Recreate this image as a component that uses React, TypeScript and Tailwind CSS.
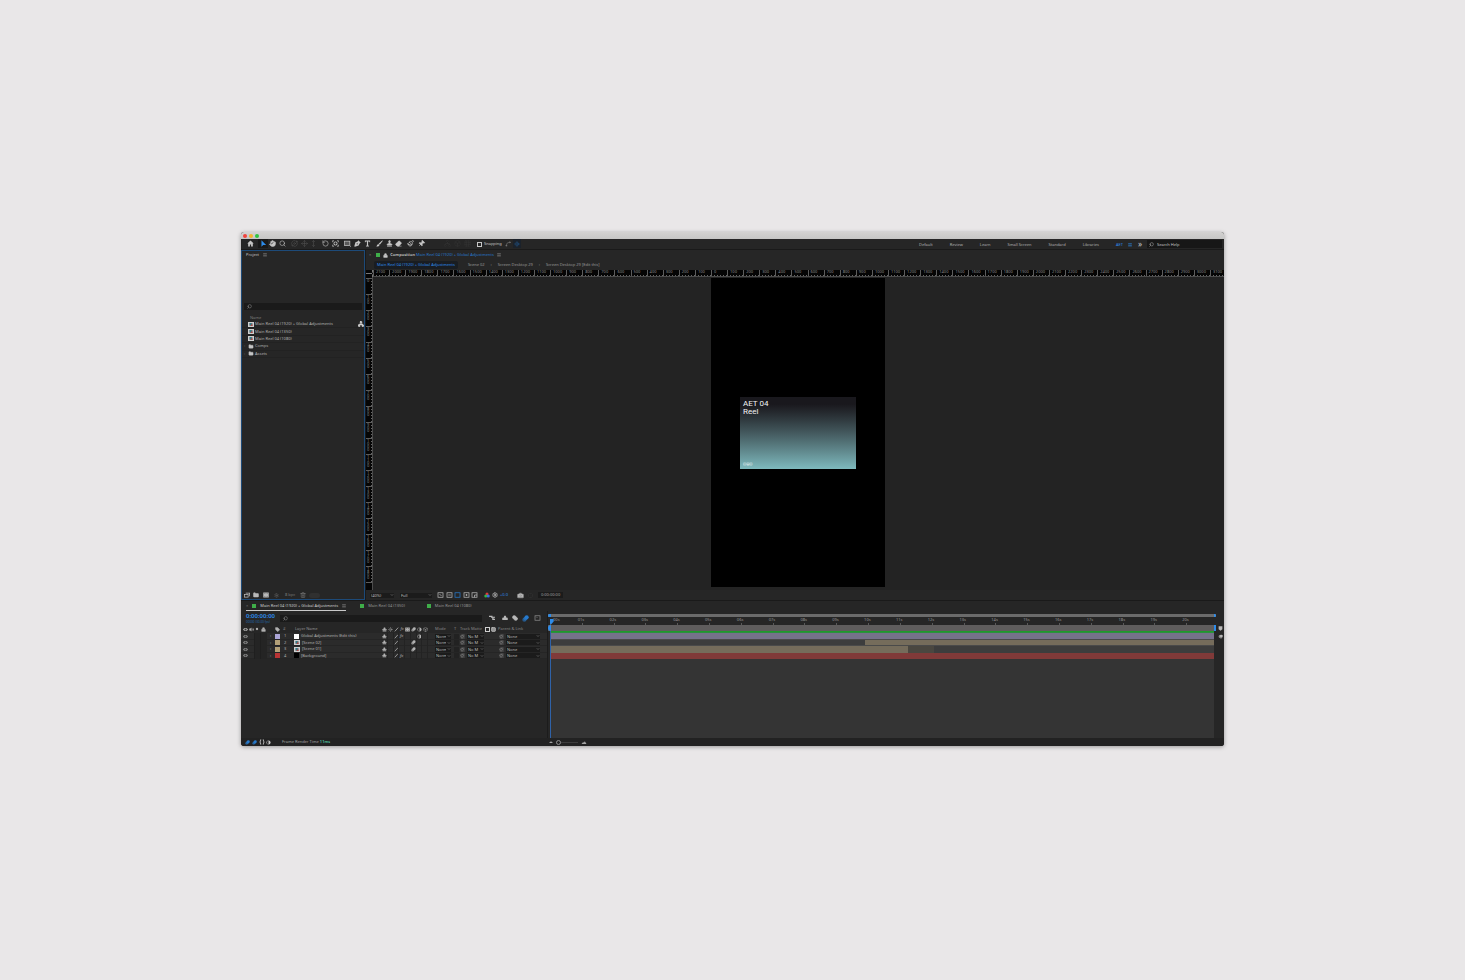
import React from "react";
import type { ReactNode } from "react";
import {
  Blend,
  Box,
  Camera,
  ChevronDown,
  CircleDashed,
  Eraser,
  Folder,
  Grid3x3,
  Hand,
  Lock,
  LocateFixed,
  Move,
  MoveVertical,
  Network,
  Orbit,
  Paintbrush,
  Pin,
  RotateCcw,
  Search,
  Settings,
  Spline,
  Stamp,
  Sun,
  Tag,
  Trash2,
  Volume2,
} from "lucide-react";

const LONG_NAME = "Main Reel 04 (1920) + Global Adjustments";

function Svg({ children, className = "size-[7px]" }: { children: ReactNode; className?: string }) {
  return (
    <svg viewBox="0 0 24 24" fill="currentColor" className={className} aria-hidden="true">
      {children}
    </svg>
  );
}

const HomeIcon = () => (
  <Svg>
    <path d="M12 2 1 12h3v10h6v-7h4v7h6V12h3z" />
  </Svg>
);
const ArrowIcon = () => (
  <Svg>
    <path d="M5 1v22l6-6 2 0 8 0z" />
  </Svg>
);
const PenIcon = () => (
  <Svg>
    <path d="M15 1l8 8-4 3-3 7L3 23l-2-2L5 8l7-3zM4 20l6-6" />
    <circle cx="11" cy="13" r="2" fill="#262626" />
  </Svg>
);
const TypeIcon = () => (
  <Svg>
    <path d="M3 2h18v6h-2l-1-3h-4v14l3 1v2H7v-2l3-1V5H6L5 8H3z" />
  </Svg>
);
const BrushIcon = () => (
  <Svg>
    <path d="M22 1l1 2-10 13-4-3zM8 14l4 4c-2 4-6 5-11 4 3-2 3-7 7-8z" />
  </Svg>
);
const ShapeIcon = () => (
  <svg viewBox="0 0 24 24" fill="none" stroke="currentColor" strokeWidth="2.5" className="size-[7px]" aria-hidden="true">
    <rect x="1" y="4" width="19" height="15" fill="#5a5a5a" />
    <path d="M20 23h4v-4z" fill="currentColor" stroke="none" />
  </svg>
);
const MenuIcon = ({ className = "size-[4px] text-[#8a8a8a]" }: { className?: string }) => (
  <Svg className={className}>
    <path d="M1 3h22v3H1zM1 10h22v3H1zM1 17h22v3H1z" />
  </Svg>
);
const CompIcon = () => (
  <svg viewBox="0 0 24 20" className="h-[5px] w-[6px] shrink-0" aria-hidden="true">
    <rect width="24" height="20" fill="#cfcfcf" />
    <rect x="6" y="4" width="12" height="12" fill="#6c7478" />
    <circle cx="10" cy="8" r="4" fill="#2c7f8c" />
    <rect x="12" y="10" width="6" height="6" fill="#b0453f" />
  </svg>
);
const EyeIcon = () => (
  <Svg className="size-[5px]">
    <path d="M0 12C4 6 8 5 12 5s8 1 12 7c-4 6-8 7-12 7S4 18 0 12z" />
    <circle cx="12" cy="12" r="5" fill="#3a3a3a" />
  </Svg>
);
const ShyIcon = () => (
  <Svg className="size-[5px]">
    <path d="M9 2h6l2 5v4h6v3H1v-3h6V7zM3 16h18v5H3z" />
  </Svg>
);
const SlashIcon = () => (
  <svg viewBox="0 0 24 24" fill="none" stroke="currentColor" strokeWidth="4" className="size-[5px]" aria-hidden="true">
    <path d="M4 21 20 3" />
  </svg>
);
const BlurIcon = ({ className = "size-[5px]" }: { className?: string }) => (
  <Svg className={className}>
    <circle cx="8" cy="16" r="7" opacity=".6" />
    <circle cx="12" cy="12" r="7" opacity=".7" />
    <circle cx="16" cy="8" r="7" />
  </Svg>
);
const HalfIcon = () => (
  <Svg className="size-[5px]">
    <circle cx="12" cy="12" r="10" />
    <path d="M12 4a8 8 0 0 0 0 16z" fill="#262626" />
  </Svg>
);
const BracesIcon = () => (
  <Svg className="size-[6px]">
    <path d="M9 2H6C3 2 4 8 4 9c0 2-3 1-3 3s3 1 3 3c0 1-1 7 2 7h3v-3H7v-5l-2-2 2-2V5h2zM15 2h3c3 0 2 6 2 7 0 2 3 1 3 3s-3 1-3 3c0 1 1 7-2 7h-3v-3h2v-5l2-2-2-2V5h-2z" />
  </Svg>
);
const FilmIcon = ({ className = "size-[5px]" }: { className?: string }) => (
  <Svg className={className}>
    <path d="M1 2h22v20H1zM6 5v2h3V5zm0 12v2h3v-2zm9-12v2h3V5zm0 12v2h3v-2z" fillRule="evenodd" />
  </Svg>
);
const FootageIcon = () => (
  <Svg className="size-[6px]">
    <path d="M7 3h17v14h-3V6H7z" />
    <path d="M0 8h18v14H0zm3 3v8h12v-8z" fillRule="evenodd" />
  </Svg>
);
const WhipIcon = () => (
  <svg viewBox="0 0 24 24" fill="none" stroke="currentColor" strokeWidth="3" className="size-[5px]" aria-hidden="true">
    <path d="M20 5H9a7 7 0 1 0 8 7 4 4 0 1 0-6 3" />
    <path d="M21 2v20H3" opacity=".4" />
  </svg>
);
const MonitorIcon = ({ mark }: { mark?: ReactNode }) => (
  <svg viewBox="0 0 24 24" fill="none" stroke="currentColor" strokeWidth="3" className="h-[6px] w-[7px]" aria-hidden="true">
    <rect x="2" y="3" width="20" height="18" />
    {mark}
  </svg>
);

function IconButton({
  label,
  className,
  children,
}: {
  label: string;
  className: string;
  children: ReactNode;
}) {
  return (
    <button type="button" aria-label={label} className={`flex h-full shrink-0 items-center justify-center ${className}`}>
      {children}
    </button>
  );
}

function Select({ label, value, className }: { label: string; value: string; className: string }) {
  return (
    <span className={`flex items-center bg-[#1b1b1b] ${className}`}>
      <select aria-label={label} className="h-[5px] w-full min-w-0 appearance-none bg-transparent px-px leading-[5px] text-[#bdbdbd]">
        <option>{value}</option>
      </select>
      <ChevronDown className="pointer-events-none size-[4px] shrink-0 text-[#8f8f8f]" strokeWidth={3} />
    </span>
  );
}

function Toolbar() {
  const spaces = ["Default", "Review", "Learn", "Small Screen", "Standard", "Libraries"];
  return (
    <header className="flex h-[10px] items-center bg-[#262626] text-[#c6c6c6]">
      <div className="flex h-full items-center pb-px pl-[4px]">
        <IconButton label="Home" className="w-[11px]"><HomeIcon /></IconButton>
        <IconButton label="Selection" className="ml-[2px] w-[10px] bg-[#1a1a1a] text-[#2d8ceb]"><ArrowIcon /></IconButton>
        <IconButton label="Hand" className="w-[9px]"><Hand className="size-[7px] fill-current" /></IconButton>
        <IconButton label="Zoom" className="w-[10px]"><Search className="size-[7px]" /></IconButton>
        <div className="ml-[2px] flex h-full text-[#505050]">
          <IconButton label="Orbit" className="w-[10px]"><Orbit className="size-[7px]" /></IconButton>
          <IconButton label="Pan camera" className="w-[10px]"><Move className="size-[7px]" /></IconButton>
          <IconButton label="Dolly" className="w-[9px]"><MoveVertical className="size-[7px]" /></IconButton>
        </div>
        <IconButton label="Rotation" className="ml-[2px] w-[10px]"><RotateCcw className="size-[7px]" /></IconButton>
        <IconButton label="Anchor point" className="w-[10px]">
          <Svg>
            <path d="M1 2h6v2H3v4H1zM17 2h6v6h-2V4h-4zM1 16h2v4h4v2H1zM21 16h2v6h-6v-2h4z" />
            <path d="M12 5a7 7 0 1 0 0 14 7 7 0 0 0 0-14zm0 3a4 4 0 1 1 0 8 4 4 0 0 1 0-8z" fillRule="evenodd" />
          </Svg>
        </IconButton>
        <IconButton label="Rectangle" className="ml-[2px] w-[11px]"><ShapeIcon /></IconButton>
        <IconButton label="Pen" className="w-[9px]"><PenIcon /></IconButton>
        <IconButton label="Type" className="w-[10px]"><TypeIcon /></IconButton>
        <IconButton label="Brush" className="ml-[2px] w-[10px]"><BrushIcon /></IconButton>
        <IconButton label="Clone stamp" className="w-[10px]"><Stamp className="size-[7px] fill-current" /></IconButton>
        <IconButton label="Eraser" className="w-[9px]"><Eraser className="size-[7px] fill-current" /></IconButton>
        <IconButton label="Roto brush" className="ml-[2px] w-[11px]"><Paintbrush className="size-[7px]" strokeWidth={2.5} /></IconButton>
        <IconButton label="Puppet pin" className="w-[11px]"><Pin className="size-[7px] rotate-45 fill-current" /></IconButton>
        <div className="ml-[15px] flex h-full text-[#343434]">
          <IconButton label="Local axis" className="w-[10px]"><Network className="size-[7px]" /></IconButton>
          <IconButton label="World axis" className="w-[10px]"><Box className="size-[7px]" /></IconButton>
          <IconButton label="View axis" className="w-[10px]"><Grid3x3 className="size-[7px]" /></IconButton>
        </div>
        <label className="ml-[5px] flex items-center gap-[2px] pt-px">
          <input type="checkbox" className="size-[5px] appearance-none border border-[#c6c6c6]" />
          Snapping
        </label>
        <IconButton label="Snap edges" className="ml-[2px] w-[8px] text-[#8a8a8a]"><Spline className="size-[6px]" /></IconButton>
        <IconButton label="Snap features" className="ml-px w-[8px] bg-[#1b222b] text-[#24507c]"><LocateFixed className="size-[6px]" /></IconButton>
      </div>
      <nav className="ml-auto flex items-center gap-[17px] pt-px text-[#b0b0b0]">
        {spaces.map((s) => (
          <button key={s} type="button">{s}</button>
        ))}
        <button type="button" className="flex items-center gap-[5px] text-[#2d8ceb]">
          AET
          <MenuIcon className="size-[4px]" />
        </button>
      </nav>
      <button type="button" aria-label="More workspaces" className="ml-[6px] text-[8px] leading-[6px]">»</button>
      <label className="ml-[5px] mr-[2px] flex h-[8px] w-[75px] items-center gap-[3px] bg-[#171717] pt-px pl-[2px]">
        <Search className="size-[5px] -scale-x-100" />
        <input aria-label="Search Help" placeholder="Search Help" className="w-[60px] placeholder:text-[#c6c6c6]" />
      </label>
    </header>
  );
}

function ProjectPanel() {
  const items = [
    { name: LONG_NAME, comp: true },
    { name: "Main Reel 04 (1350)", comp: true },
    { name: "Main Reel 04 (1080)", comp: true },
    { name: "Comps", comp: false },
    { name: "Assets", comp: false },
  ];
  return (
    <section className="flex w-[124px] shrink-0 flex-col border border-[#1d4a78] bg-[#262626]">
      <h2 className="flex h-[8px] items-center gap-[4px] pl-[4px] text-[#c4c4c4]">
        Project <MenuIcon />
      </h2>
      <label className="mx-[2px] mt-[44px] flex h-[7px] items-center bg-[#1a1a1a] pl-[3px] text-[#a8a8a8]">
        <Search className="size-[5px] -scale-x-100" />
        <input aria-label="Search project" className="min-w-0 flex-1" />
      </label>
      <p className="mt-[5px] h-[6px] pl-[8px] text-[#7c7c7c]">Name</p>
      <ul className="grid h-[37px] grid-rows-5">
        {items.map((it) => (
          <li key={it.name} className="flex items-center gap-px border-b border-[#222222] pl-[2px] text-[#b2b2b2]">
            <span className="w-[3px] text-[#6a6a6a]">{it.comp ? "" : "›"}</span>
            {it.comp ? <CompIcon /> : <Folder className="h-[5px] w-[6px] fill-[#c4c4c4] text-[#c4c4c4]" />}
            <span>{it.name}</span>
            {it.name === LONG_NAME && <Network className="ml-auto size-[6px] fill-current text-[#d0d0d0]" strokeWidth={3} />}
          </li>
        ))}
      </ul>
      <footer className="mt-auto flex h-[8px] items-center text-[#b8b8b8]">
        <IconButton label="Interpret footage" className="w-[9px]"><FootageIcon /></IconButton>
        <IconButton label="New folder" className="w-[10px]"><Folder className="size-[6px] fill-current" /></IconButton>
        <IconButton label="New composition" className="w-[9px]"><FilmIcon className="size-[6px]" /></IconButton>
        <IconButton label="Adjust" className="w-[12px] text-[#6a6a6a]"><Settings className="size-[5px]" /></IconButton>
        <button type="button" className="ml-[3px] text-[#7c7c7c]">8 bpc</button>
        <IconButton label="Delete" className="ml-[3px] w-[9px] text-[#808080]"><Trash2 className="size-[6px]" /></IconButton>
        <span className="ml-[2px] h-[5px] w-[11px] rounded-full bg-[#303030]" />
      </footer>
    </section>
  );
}

const rulerMarks = Array.from({ length: 53 }, (_, i) => Math.abs(i - 21) * 100);
const sideMarks = Array.from({ length: 19 }, (_, i) => i * 100);

function Viewer() {
  return (
    <section className="flex min-w-0 flex-1 flex-col bg-[#262626]">
      <h2 className="flex h-[10px] shrink-0 items-center pl-[3px] text-[#c8c8c8]">
        <button type="button" aria-label="Close" className="text-[#777777]">×</button>
        <span className="ml-[5px] size-[4px] bg-[#3fae49]" />
        <Lock className="ml-[3px] size-[5px] fill-current" />
        <span className="ml-[2px] font-semibold">Composition</span>
        <span className="ml-px text-[#2679cc]">{LONG_NAME}</span>
        <MenuIcon className="ml-[3px] size-[4px] text-[#8a8a8a]" />
      </h2>
      <nav className="flex h-[10px] shrink-0 items-center gap-[6px] pl-[8px] text-[#9a9a9a]">
        <a href="#reel" className="rounded-[2px] bg-[#191d22] px-[3px] leading-[8px] text-[#2d8ceb]">{LONG_NAME}</a>
        <a href="#scene" className="pl-[4px]">Scene 02</a>
        <span>‹</span>
        <a href="#screen">Screen Desktop 29</a>
        <span>‹</span>
        <a href="#edit">Screen Desktop 29 [Edit this]</a>
      </nav>
      <div className="flex h-[7px] shrink-0 overflow-hidden bg-[#050505]">
        <div className="w-[7px] shrink-0 border-r border-dashed border-[#777777]">
          <div className="mt-[3px] border-t border-dashed border-[#777777]" />
        </div>
        <div className="-mr-[2px] flex flex-1 border-b border-[#4c4c4c]">
          {rulerMarks.map((m, i) => (
            <div
              key={i}
              className="flex min-w-0 flex-1 flex-col justify-between border-l border-[#5c5c5c] text-[4px] leading-[4px] text-[#8c8c8c]"
            >
              <span className="pl-[2px]">{m}</span>
              <span className="ml-[2px] h-px bg-[repeating-linear-gradient(90deg,#666666_0_1px,transparent_1px_3px)]" />
            </div>
          ))}
        </div>
      </div>
      <div className="flex h-[313px] shrink-0">
        <div className="flex w-[7px] shrink-0 flex-col border-r border-[#4c4c4c] bg-[#050505] pt-px">
          {sideMarks.map((m) => (
            <div key={m} className="flex h-[16px] shrink-0 justify-between border-t border-[#5c5c5c]">
              <span className="pl-px text-[4px] leading-[3px] text-[#8c8c8c]">
                {String(m).split("").map((d, i) => (
                  <span key={i} className="block">{d}</span>
                ))}
              </span>
              <span className="mt-[2px] w-px bg-[repeating-linear-gradient(180deg,#666666_0_1px,transparent_1px_3px)]" />
            </div>
          ))}
          <div className="flex-1 border-t border-[#5c5c5c]" />
        </div>
        <div className="flex flex-1 items-start justify-center bg-[#232323] pt-px pr-px">
          <div className="flex h-[309px] w-[174px] items-center justify-center bg-black">
            <div className="flex h-[72px] w-[116px] flex-col justify-between bg-linear-to-b from-[#19181d] from-10% to-[#7ebabe] px-[3px] pt-[3px] pb-[2px] font-['Roboto',sans-serif] text-[8px] leading-[8px] text-[#f2f2f2]">
              <p>AET 04<br />Reel</p>
              <p className="text-[4px] leading-[5px] text-white">©®©</p>
            </div>
          </div>
        </div>
      </div>
      <footer className="flex h-[10px] shrink-0 items-center pl-[4px] text-[#b8b8b8]">
        <Select label="Magnification" value="(40%)" className="w-[24px]" />
        <Select label="Resolution" value="Full" className="ml-[6px] w-[32px]" />
        <div className="ml-[4px] flex h-full items-center">
          <IconButton label="Fast previews" className="w-[9px]"><MonitorIcon mark={<path d="m8 8 8 8" />} /></IconButton>
          <IconButton label="Transparency grid" className="w-[8px]"><MonitorIcon mark={<path d="M7 12h10" />} /></IconButton>
          <IconButton label="Mask visibility" className="w-[9px] text-[#2679cc]"><MonitorIcon /></IconButton>
          <IconButton label="Region of interest" className="w-[8px]"><MonitorIcon mark={<path d="M12 8v8M8 12h8" />} /></IconButton>
          <IconButton label="Guides" className="w-[9px]"><MonitorIcon mark={<path d="M12 21v-9h10" />} /></IconButton>
        </div>
        <IconButton label="Channels" className="ml-[4px] w-[8px]">
          <Svg className="size-[6px]">
            <circle cx="12" cy="8" r="6" fill="#e03a3a" />
            <circle cx="7" cy="16" r="6" fill="#35b34a" />
            <circle cx="17" cy="16" r="6" fill="#3a6fe0" />
          </Svg>
        </IconButton>
        <IconButton label="Reset exposure" className="w-[8px]"><Settings className="size-[6px]" strokeWidth={3} /></IconButton>
        <button type="button" className="ml-px text-[#2d8ceb]">+0.0</button>
        <IconButton label="Take snapshot" className="ml-[9px] w-[8px]"><Camera className="size-[7px] fill-current stroke-[#8f8f8f]" /></IconButton>
        <IconButton label="Show snapshot" className="ml-[2px] w-[8px] text-[#3d3d3d]"><CircleDashed className="size-[5px]" /></IconButton>
        <button type="button" className="ml-[3px] h-[6px] bg-[#1b1b1b] px-[3px] leading-[6px] text-[#a0a0a0]">0:00:00:00</button>
      </footer>
    </section>
  );
}

type Layer = {
  name: string;
  swatch: string;
  kind: "white" | "comp" | "black";
  fx: boolean;
  blur: boolean;
  adjust: boolean;
};

const layers: Layer[] = [
  { name: "Global Adjustments (Edit this)", swatch: "bg-[#aba5d6]", kind: "white", fx: true, blur: false, adjust: true },
  { name: "[Scene 02]", swatch: "bg-[#b3a077]", kind: "comp", fx: false, blur: true, adjust: false },
  { name: "[Scene 01]", swatch: "bg-[#b3a077]", kind: "comp", fx: false, blur: true, adjust: false },
  { name: "[Background]", swatch: "bg-[#b93434]", kind: "black", fx: true, blur: false, adjust: false },
];

const COLS =
  "grid grid-cols-[6px_6px_6px_6px_8px_6px_13px_88px_46px_26px_6px_24px_14px_7px_36px] items-center pl-[2px] whitespace-nowrap";

function LayerTable() {
  return (
    <table className="block">
      <thead className="block">
        <tr className={`${COLS} h-[8px] bg-[#262626] text-[#b0b0b0] [&>th]:text-left [&>th]:font-normal`}>
          <th aria-label="Visible"><EyeIcon /></th>
          <th aria-label="Audio"><Volume2 className="size-[5px] fill-current" /></th>
          <th aria-label="Solo"><Svg className="size-[4px]"><circle cx="12" cy="12" r="7" /></Svg></th>
          <th aria-label="Lock"><Lock className="size-[5px] fill-current" /></th>
          <th />
          <th aria-label="Label"><Tag className="size-[5px] fill-current" /></th>
          <th className="pl-[2px] text-[#8a8a8a]">#</th>
          <th className="pl-px text-[#949494]">Layer Name</th>
          <th aria-label="Switches">
            <span className="grid grid-cols-8 place-items-center">
              <ShyIcon />
              <Sun className="size-[5px]" />
              <SlashIcon />
              <i>fx</i>
              <FilmIcon />
              <BlurIcon />
              <HalfIcon />
              <Box className="size-[5px]" />
            </span>
          </th>
          <th className="pl-[7px] text-[#868686]">Mode</th>
          <th className="text-[#868686]">T</th>
          <th className="text-[#868686]">Track Matte</th>
          <th aria-label="Matte options">
            <span className="flex gap-px pl-px text-[#d0d0d0]">
              <span className="size-[5px] border border-current" />
              <Grid3x3 className="size-[5px]" strokeWidth={3} />
            </span>
          </th>
          <th className="text-[#868686]" colSpan={2}>Parent &amp; Link</th>
        </tr>
      </thead>
      <tbody className="grid h-[26px] grid-rows-4">
        {layers.map((l, i) => (
          <tr key={l.name} className={`${COLS} overflow-hidden bg-[#2b2b2b] text-[#b2b2b2] shadow-[inset_0_-1px_0_#252525]`}>
            <td className="text-[#8a8a8a]"><EyeIcon /></td>
            <td className="h-full border-r border-[#1f1f1f]" />
            <td className="h-full border-r border-[#1f1f1f] bg-[#242424]" />
            <td className="h-full bg-[#242424]" />
            <td className="pl-[3px]">›</td>
            <td><span className={`block size-[5px] ${l.swatch}`} /></td>
            <td className="pl-[3px]">{i + 1}</td>
            <td>
              <span className="flex items-center gap-[2px]">
                {l.kind === "comp" && <CompIcon />}
                {l.kind === "white" && <span className="size-[5px] bg-white" />}
                {l.kind === "black" && <span className="size-[5px] bg-black" />}
                {l.name}
              </span>
            </td>
            <td className="h-full">
              <span className="grid h-full grid-cols-8 place-items-center *:flex *:h-full *:w-full *:items-center *:justify-center *:border-r *:border-[#232323]">
                <span><ShyIcon /></span>
                <span />
                <span><SlashIcon /></span>
                <span className="italic">{l.fx ? "fx" : ""}</span>
                <span />
                <span>{l.blur && <BlurIcon />}</span>
                <span>{l.adjust && <HalfIcon />}</span>
                <span />
              </span>
            </td>
            <td className="pl-[7px]"><Select label={`Mode of layer ${i + 1}`} value="Norm" className="w-[16px]" /></td>
            <td><span className="block size-[5px] bg-[#222222]" /></td>
            <td>
              <span className="flex items-center gap-[2px] text-[#8a8a8a]">
                <WhipIcon />
                <Select label={`Track matte of layer ${i + 1}`} value="No M" className="w-[17px]" />
              </span>
            </td>
            <td />
            <td className="pl-px text-[#8a8a8a]"><WhipIcon /></td>
            <td className="pl-px"><Select label={`Parent of layer ${i + 1}`} value="None" className="w-[34px]" /></td>
          </tr>
        ))}
      </tbody>
    </table>
  );
}

const seconds = Array.from({ length: 21 }, (_, i) => String(i).padStart(2, "0") + "s");

function Tracks() {
  return (
    <div className="flex min-w-0 flex-1 border-l border-[#1c1c1c] bg-[#262626]">
      <div className="flex min-w-0 flex-1 flex-col">
        <div className="mt-[3px] flex h-[3px] bg-[#6b6b6b]">
          <span className="w-[3px] rounded-l-full bg-[#2d8ceb]" />
          <span className="ml-auto w-[2px] rounded-r-full bg-[#2d8ceb]" />
        </div>
        <div className="ml-[2px] flex h-[8px] overflow-hidden">
          <ol className="-mr-[2px] grid flex-1 grid-cols-21 text-[#989898]">
            {seconds.map((s, i) => (
              <li key={s} className="relative flex flex-col justify-between">
                <span className={i === 0 ? "pl-[2px] leading-[6px]" : "-ml-[4px] leading-[6px]"}>{i === 0 ? ":00s" : s}</span>
                <span className="h-[2px] w-px bg-[#5a5a5a]" />
                {i === 0 && (
                  <svg viewBox="0 0 12 14" className="absolute top-[2px] -left-[2px] h-[6px] w-[6px]" aria-hidden="true">
                    <path d="M0 0h12v6l-6 7-6-7z" fill="#2d8ceb" />
                  </svg>
                )}
              </li>
            ))}
          </ol>
        </div>
        <div className="flex h-[6px] bg-[#5f5d5d]">
          <span className="w-[3px] rounded-l-full bg-[#2d8ceb]" />
          <span className="ml-auto w-[2px] bg-[#2d8ceb]" />
        </div>
        <div className="mr-[2px] ml-[2px] flex flex-1 flex-col border-l border-[#2f62a8] bg-[#343434]">
          <div className="h-[2px] bg-linear-to-b from-[#12a01c] to-[#2f8a45]" />
          <div className="grid h-[26px] grid-rows-4">
            <div className="border-b border-[#4a4a4a] bg-[#75728a]" />
            <div className="flex justify-end border-b border-[#4a4a4a] bg-[#3d3d3d]">
              <span className="w-[349px] bg-[#756c5b]" />
            </div>
            <div className="flex bg-[#3d3d3d]">
              <span className="w-[357px] bg-[#756c5b]" />
              <span className="w-[26px] bg-[#4a4740]" />
            </div>
            <div className="bg-[#803a39]" />
          </div>
        </div>
      </div>
      <aside className="flex w-[8px] flex-col items-center gap-[3px] bg-[#262626] pt-[15px] text-[#b8b8b8]">
        <Svg className="size-[5px]"><path d="M3 1h18v15l-9 7-9-7z" /></Svg>
        <Svg className="size-[5px]"><path d="M12 3a10 9 0 1 0 10 12H12z" opacity=".7" /><circle cx="16" cy="10" r="7" /></Svg>
      </aside>
    </div>
  );
}

function Timeline() {
  return (
    <section className="bg-[#262626]">
      <div className="flex h-[10px] items-start text-[#969696]">
        <div className="ml-[5px] flex h-[10px] items-center border-b border-[#c8c8c8] text-[#d0d0d0]">
          <button type="button" aria-label="Close" className="text-[#777777]">×</button>
          <span className="mx-[4px] size-[4px] bg-[#3fae49]" />
          <button type="button">{LONG_NAME}</button>
          <MenuIcon className="ml-[4px] size-[4px] text-[#8a8a8a]" />
        </div>
        <button type="button" className="ml-[14px] flex h-[10px] items-center gap-[4px]">
          <span className="size-[4px] bg-[#3fae49]" />Main Reel 04 (1350)
        </button>
        <button type="button" className="ml-[22px] flex h-[10px] items-center gap-[4px]">
          <span className="size-[4px] bg-[#3fae49]" />Main Reel 04 (1080)
        </button>
      </div>
      <div className="flex h-[127px]">
        <div className="w-[306px] shrink-0">
          <div className="flex h-[14px] items-center">
            <div className="w-[35px] pl-[5px] text-[#2d8ceb]">
              <p className="text-[6px] leading-[7px] font-semibold">0:00:00:00</p>
              <p className="text-[3px] leading-[4px] whitespace-nowrap text-[#2468ab]">00000 (30.00 fps)</p>
            </div>
            <label className="ml-[4px] flex h-[7px] w-[202px] items-center bg-[#1a1a1a] pl-[3px] text-[#a8a8a8]">
              <Search className="size-[5px] -scale-x-100" />
              <input aria-label="Search layers" className="min-w-0 flex-1" />
            </label>
            <div className="ml-[5px] flex flex-1 items-center text-[#b8b8b8]">
              <IconButton label="Mini-flowchart" className="w-[9px]">
                <Svg className="size-[6px]"><path d="M0 3h14v4h10v4h-6v4h6v5H13v-9H8V8H0z" /></Svg>
              </IconButton>
              <IconButton label="Hide shy layers" className="ml-[4px] w-[10px]">
                <Svg className="size-[6px]"><path d="M9 3h6l3 8h5v9H1v-9h5z" /></Svg>
              </IconButton>
              <IconButton label="Frame blending" className="w-[10px]"><Blend className="size-[6px] fill-current" /></IconButton>
              <IconButton label="Motion blur" className="w-[10px] text-[#2679cc]"><BlurIcon className="size-[7px]" /></IconButton>
              <IconButton label="Graph editor" className="ml-[3px] w-[9px] text-[#8a8a8a]"><MonitorIcon mark={<path d="m7 7 4 4" />} /></IconButton>
            </div>
          </div>
          <LayerTable />
        </div>
        <Tracks />
      </div>
    </section>
  );
}

function StatusBar() {
  return (
    <footer className="flex h-[8px] items-center bg-[#222222] text-[#a4a4a4]">
      <div className="flex h-full w-[306px] items-center pl-[2px]">
        <IconButton label="Layer switches" className="w-[8px] text-[#2679cc]"><BlurIcon /></IconButton>
        <IconButton label="Transfer controls" className="w-[7px] text-[#2679cc]"><BlurIcon /></IconButton>
        <IconButton label="In and out" className="w-[7px] text-[#c8c8c8]"><BracesIcon /></IconButton>
        <IconButton label="Render time" className="w-[7px] text-[#c8c8c8]"><HalfIcon /></IconButton>
        <span className="ml-[10px] whitespace-nowrap">
          Frame Render Time <b className="font-semibold text-[#4fc3a1]">11ms</b>
        </span>
      </div>
      <label className="flex items-center gap-[3px] pl-[2px]">
        <Svg className="size-[4px]"><path d="m0 18 12-10 12 10z" /></Svg>
        <input
          type="range"
          aria-label="Timeline zoom"
          defaultValue={0}
          className="h-[5px] w-[22px] appearance-none bg-[linear-gradient(#3c3c3c,#3c3c3c)] bg-[length:100%_1px] bg-center bg-no-repeat [&::-webkit-slider-thumb]:size-[5px] [&::-webkit-slider-thumb]:appearance-none [&::-webkit-slider-thumb]:rounded-full [&::-webkit-slider-thumb]:border [&::-webkit-slider-thumb]:border-[#8c8c8c] [&::-webkit-slider-thumb]:bg-[#222222]"
        />
        <Svg className="h-[5px] w-[6px]"><path d="m0 19 8-9 3 3 5-7 8 13z" /></Svg>
      </label>
    </footer>
  );
}

export default function App() {
  return (
    <main className="flex min-h-screen items-center bg-[#e9e7e8] px-[241px] pb-[2px] antialiased">
      <div className="min-w-0 flex-1 overflow-hidden rounded-[3px] bg-[#1a1a1a] font-['Noto_Sans',sans-serif] text-[4px] leading-[6px] whitespace-nowrap shadow-[0_1px_4px_rgba(0,0,0,0.35)]">
        <div className="flex h-[7px] items-center gap-[2px] bg-linear-to-b from-[#d3d2d1] to-[#c6c6c5] pl-[2px]">
          <button type="button" aria-label="Close window" className="size-[4px] rounded-full bg-[#f0443e]" />
          <button type="button" aria-label="Minimise window" className="size-[4px] rounded-full bg-[#f5b32c]" />
          <button type="button" aria-label="Zoom window" className="size-[4px] rounded-full bg-[#30c440]" />
        </div>
        <Toolbar />
        <div className="mt-px flex gap-px">
          <ProjectPanel />
          <Viewer />
        </div>
        <div className="mt-px">
          <Timeline />
        </div>
        <StatusBar />
      </div>
    </main>
  );
}
